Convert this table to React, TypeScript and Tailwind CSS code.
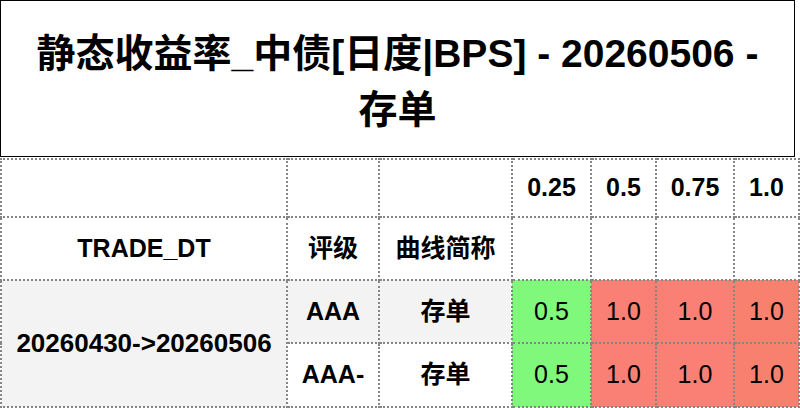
const font = { fontFamily: '"Liberation Sans", "Noto Sans CJK SC", sans-serif' };

const cell = 'border-2 border-dotted border-[#858585] text-center align-middle p-0';

export default function App() {
  return (
    <div className="w-[800px] h-[408px] bg-white overflow-hidden text-black" style={font}>
      <div className="w-[795px] h-[157px] border border-black flex flex-col items-center justify-center pt-[6px] font-bold text-[39px] leading-[56px]">
        <div>静态收益率_中债[日度|BPS] - 20260506 -</div>
        <div>存单</div>
      </div>
      <table className="mt-[1px] w-[798px] border-collapse table-fixed text-[25px]">
        <colgroup>
          <col className="w-[286px]" />
          <col className="w-[92px]" />
          <col className="w-[133px]" />
          <col className="w-[79px]" />
          <col className="w-[65px]" />
          <col className="w-[78px]" />
          <col className="w-[65px]" />
        </colgroup>
        <tbody>
          <tr className="h-[58px] font-bold">
            <td className={cell}></td>
            <td className={cell}></td>
            <td className={cell}></td>
            <td className={cell}>0.25</td>
            <td className={cell}>0.5</td>
            <td className={cell}>0.75</td>
            <td className={cell}>1.0</td>
          </tr>
          <tr className="h-[63px] font-bold">
            <td className={cell}>TRADE_DT</td>
            <td className={cell}>评级</td>
            <td className={cell}>曲线简称</td>
            <td className={cell}></td>
            <td className={cell}></td>
            <td className={cell}></td>
            <td className={cell}></td>
          </tr>
          <tr className="h-[63px]">
            <td rowSpan={2} className={`${cell} bg-[#f3f3f3] font-bold text-[26px]`}>20260430-&gt;20260506</td>
            <td className={`${cell} bg-[#f3f3f3] font-bold`}>AAA</td>
            <td className={`${cell} bg-[#f3f3f3] font-bold`}>存单</td>
            <td className={`${cell} bg-[#80f87b]`}>0.5</td>
            <td className={`${cell} bg-[#fa7f74]`}>1.0</td>
            <td className={`${cell} bg-[#fa7f74]`}>1.0</td>
            <td className={`${cell} bg-[#f7806f]`}>1.0</td>
          </tr>
          <tr className="h-[64px]">
            <td className={`${cell} font-bold`}>AAA-</td>
            <td className={`${cell} font-bold`}>存单</td>
            <td className={`${cell} bg-[#80f87b]`}>0.5</td>
            <td className={`${cell} bg-[#fa7f74]`}>1.0</td>
            <td className={`${cell} bg-[#fa7f74]`}>1.0</td>
            <td className={`${cell} bg-[#f7806f]`}>1.0</td>
          </tr>
        </tbody>
      </table>
    </div>
  );
}
